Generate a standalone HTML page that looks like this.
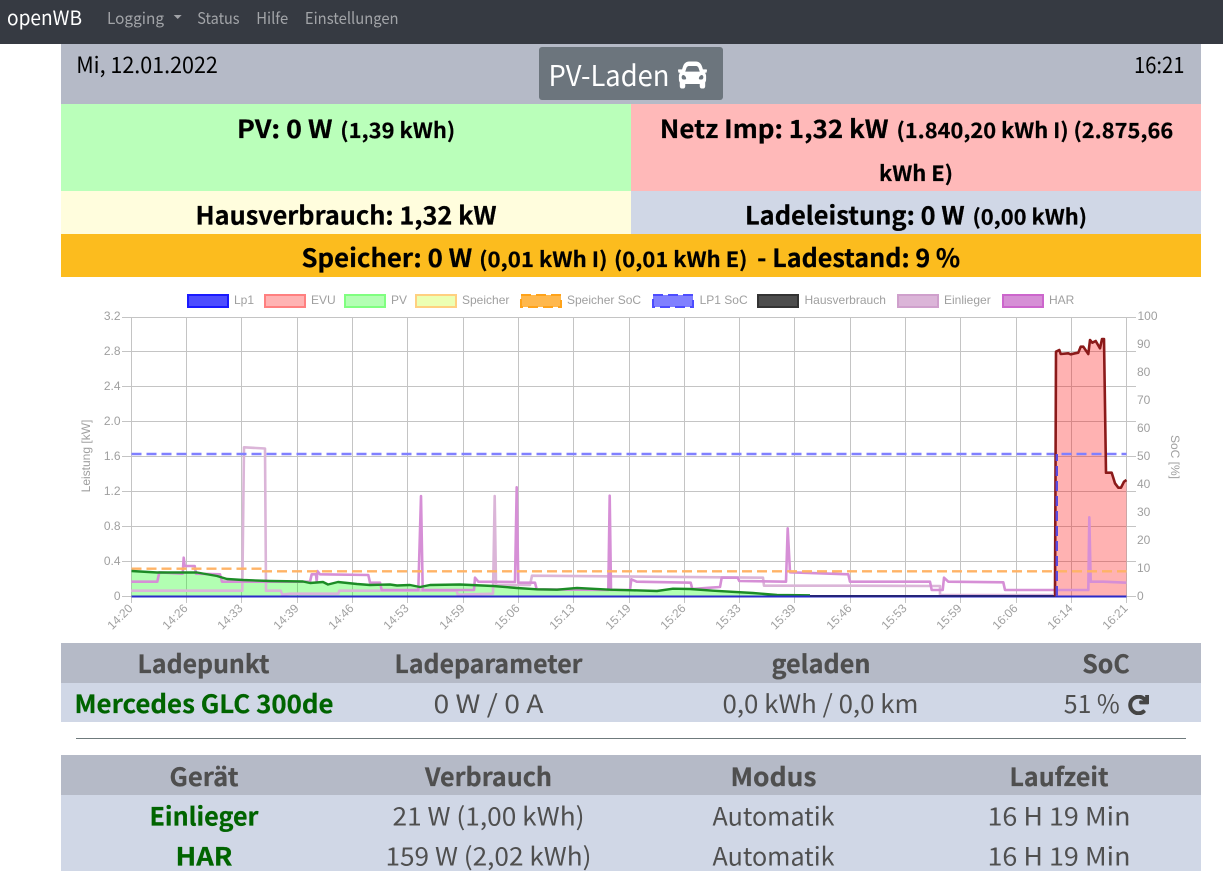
<!DOCTYPE html>
<html lang="de"><head><meta charset="utf-8"><title>openWB</title>
<style>
html,body{margin:0;padding:0;background:#fff;width:1223px;height:871px;overflow:hidden}
svg{display:block;position:absolute;left:0;top:0}
.n{font-family:"Noto Sans CJK JP","Liberation Sans",sans-serif}
.b{font-weight:700}
.c{font-family:"Liberation Sans",Arial,sans-serif;font-size:12px;fill:#9f9f9f}
.th{font-size:25px;font-weight:700;fill:#4f4f4f;stroke:#4f4f4f;stroke-width:.25px}
.td{font-size:25px;fill:#4f4f4f}
.gr{font-size:25px;font-weight:700;fill:#006400;stroke:#006400;stroke-width:.25px}
.nv{font-size:16px;fill:#a2a4a8}
.m{font-size:25px;font-weight:700;fill:#000;stroke:#000;stroke-width:.25px}
.s{font-size:21px;font-weight:700;fill:#000;stroke:#000;stroke-width:.2px}
</style></head><body>
<svg width="1223" height="871" viewBox="0 0 1223 871" xmlns="http://www.w3.org/2000/svg">
<defs></defs>
<!-- backgrounds -->
<rect x="0" y="0" width="1223" height="44" fill="#363a42"/>
<rect x="61" y="44" width="1140" height="60" fill="#b5bac7"/>
<rect x="61" y="104" width="570" height="87" fill="#baffba"/>
<rect x="631" y="104" width="570" height="87" fill="#ffb9b9"/>
<rect x="61" y="191" width="570" height="43" fill="#fffddd"/>
<rect x="631" y="191" width="570" height="43" fill="#d0d7e6"/>
<rect x="61" y="234" width="1140" height="43" fill="#fcbc1e"/>
<rect x="539" y="47" width="184" height="53" rx="3" fill="#6c757d"/>
<rect x="61" y="643" width="1140" height="40" fill="#b5bac7"/>
<rect x="61" y="683" width="1140" height="39" fill="#d0d7e6"/>
<rect x="76" y="738" width="1110" height="1" fill="#6f7a7c"/>
<rect x="61" y="755" width="1140" height="40" fill="#b5bac7"/>
<rect x="61" y="795" width="1140" height="76" fill="#d0d7e6"/>

<!-- navbar -->
<g class="n">
<text x="7" y="25" font-size="20" fill="#fff" textLength="75" lengthAdjust="spacingAndGlyphs">openWB</text>
<text class="nv" x="107" y="24" textLength="57" lengthAdjust="spacingAndGlyphs">Logging</text>
<text class="nv" x="197.3" y="24" textLength="42.3" lengthAdjust="spacingAndGlyphs">Status</text>
<text class="nv" x="256.2" y="24" textLength="32" lengthAdjust="spacingAndGlyphs">Hilfe</text>
<text class="nv" x="304.9" y="24" textLength="93.7" lengthAdjust="spacingAndGlyphs">Einstellungen</text>
</g>
<path d="M173.7 15h8l-4 4z" fill="#a2a4a8"/>

<!-- header -->
<g class="n">
<text x="76.2" y="73" font-size="22.5" fill="#000" textLength="141.7" lengthAdjust="spacingAndGlyphs">Mi, 12.01.2022</text>
<text x="1134" y="73" font-size="22.5" fill="#000" textLength="50.5" lengthAdjust="spacingAndGlyphs">16:21</text>
<text x="548.5" y="86" font-size="28.5" fill="#fff" textLength="121" lengthAdjust="spacingAndGlyphs">PV-Laden</text>
</g>
<svg x="678" y="57" width="29" height="36" viewBox="0 0 512 512" preserveAspectRatio="none"><path fill="#fff" d="M499.99 176h-59.87l-16.64-41.6C406.38 91.63 365.57 64 319.5 64h-127c-46.06 0-86.88 27.63-103.99 70.4L71.87 176H12.01C4.2 176-1.53 183.34.37 190.91l6 24C7.7 220.25 12.5 224 18.01 224h20.07C24.65 235.73 16 252.78 16 272v48c0 16.12 6.16 30.67 16 41.93V416c0 17.67 14.33 32 32 32h32c17.67 0 32-14.33 32-32v-32h256v32c0 17.67 14.33 32 32 32h32c17.67 0 32-14.33 32-32v-54.07c9.84-11.25 16-25.8 16-41.93v-48c0-19.22-8.65-36.27-22.07-48H494c5.51 0 10.31-3.75 11.64-9.09l6-24c1.89-7.57-3.84-14.91-11.65-14.91zm-352.06-17.83c7.29-18.22 24.94-30.17 44.57-30.17h127c19.63 0 37.28 11.95 44.57 30.17L384 208H128l19.93-49.83zM96 319.8c-19.2 0-32-12.76-32-31.9S76.8 256 96 256s48 28.71 48 47.85-28.8 15.95-48 15.95zm320 0c-19.2 0-48 3.19-48-15.95S396.8 256 416 256s32 12.76 32 31.9-12.8 31.9-32 31.9z"/></svg>

<!-- status rows -->
<g class="n">
<text class="m" x="237" y="138" textLength="95.5" lengthAdjust="spacingAndGlyphs">PV: 0 W</text>
<text class="s" x="340.3" y="138" textLength="114.9" lengthAdjust="spacingAndGlyphs">(1,39 kWh)</text>
<text class="m" x="659.9" y="138" textLength="228.6" lengthAdjust="spacingAndGlyphs">Netz Imp: 1,32 kW</text>
<text class="s" x="896.5" y="138" textLength="276.7" lengthAdjust="spacingAndGlyphs">(1.840,20 kWh I) (2.875,66</text>
<text class="s" x="879" y="181" textLength="74" lengthAdjust="spacingAndGlyphs">kWh E)</text>
<text class="m" x="195.5" y="224.5" textLength="301" lengthAdjust="spacingAndGlyphs">Hausverbrauch: 1,32 kW</text>
<text class="m" x="745" y="224.5" textLength="219.6" lengthAdjust="spacingAndGlyphs">Ladeleistung: 0 W</text>
<text class="s" x="972.5" y="224.5" textLength="114.5" lengthAdjust="spacingAndGlyphs">(0,00 kWh)</text>
<text class="m" x="301.5" y="267" textLength="170.7" lengthAdjust="spacingAndGlyphs">Speicher: 0 W</text>
<text class="s" x="479.1" y="267" textLength="128.4" lengthAdjust="spacingAndGlyphs">(0,01 kWh I)</text>
<text class="s" x="614" y="267" textLength="133.5" lengthAdjust="spacingAndGlyphs">(0,01 kWh E)</text>
<text class="m" x="757.2" y="267" textLength="202.9" lengthAdjust="spacingAndGlyphs">- Ladestand: 9 %</text>
</g>

<!-- legend -->
<g stroke-width="2">
<rect x="188" y="295" width="40" height="12" fill="#4d4dff" stroke="#1a1aff"/>
<rect x="265" y="295" width="40" height="12" fill="#ffb3b3" stroke="#ff8080"/>
<rect x="345" y="295" width="40" height="12" fill="#b3ffb3" stroke="#80ff80"/>
<rect x="416" y="295" width="40" height="12" fill="#ecffb3" stroke="#ffd080"/>
<rect x="521" y="295" width="40" height="12" fill="#ffb84d" stroke="#ffa31a" stroke-dasharray="10,5"/>
<rect x="653" y="295" width="40" height="12" fill="#8080ff" stroke="#4d4dff" stroke-dasharray="10,5"/>
<rect x="758" y="295" width="40" height="12" fill="#4d4d4d" stroke="#333"/>
<rect x="898" y="295" width="40" height="12" fill="#dbb5d8" stroke="#cfa0cc"/>
<rect x="1003" y="295" width="40" height="12" fill="#d68fd6" stroke="#cc66cc"/>
</g>
<g class="c">
<text x="234" y="304">Lp1</text><text x="311" y="304">EVU</text><text x="391" y="304">PV</text><text x="462" y="304">Speicher</text><text x="567" y="304">Speicher SoC</text><text x="699.6" y="304">LP1 SoC</text><text x="804.5" y="304">Hausverbrauch</text><text x="944" y="304">Einlieger</text><text x="1049" y="304">HAR</text>
</g>

<!-- grid -->
<path stroke="#c4c4c4" stroke-width="1" fill="none" d="M122 317.5H1136M122 351.5H1136M122 386.5H1136M122 421.5H1136M122 456.5H1136M122 491.5H1136M122 526.5H1136M122 561.5H1136M122 596.5H1136M131.5 317V603M186.5 317V603M241.5 317V603M297.5 317V603M352.5 317V603M407.5 317V603M463.5 317V603M518.5 317V603M573.5 317V603M629.5 317V603M684.5 317V603M739.5 317V603M794.5 317V603M850.5 317V603M905.5 317V603M960.5 317V603M1016.5 317V603M1071.5 317V603M1126.5 317V603"/>

<!-- y ticks -->
<g class="c" text-anchor="end">
<text x="120.5" y="320">3.2</text><text x="120.5" y="355">2.8</text><text x="120.5" y="390">2.4</text><text x="120.5" y="425">2.0</text><text x="120.5" y="460">1.6</text><text x="120.5" y="495">1.2</text><text x="120.5" y="530">0.8</text><text x="120.5" y="565">0.4</text><text x="120.5" y="600">0</text>
</g>
<g class="c">
<text x="1137.5" y="320">100</text><text x="1137" y="348">90</text><text x="1137" y="376">80</text><text x="1137" y="404">70</text><text x="1137" y="432">60</text><text x="1137" y="460">50</text><text x="1137" y="488">40</text><text x="1137" y="516">30</text><text x="1137" y="544">20</text><text x="1137" y="572">10</text><text x="1137" y="600">0</text>
</g>
<text class="c" transform="translate(90 456) rotate(-90)" text-anchor="middle">Leistung [kW]</text>
<text class="c" transform="translate(1171 457) rotate(90)" text-anchor="middle">SoC [%]</text>

<!-- x ticks -->
<g class="c" text-anchor="end">
<text transform="translate(133.5 609) rotate(-45)">14:20</text>
<text transform="translate(188.5 609) rotate(-45)">14:26</text>
<text transform="translate(243.5 609) rotate(-45)">14:33</text>
<text transform="translate(299.5 609) rotate(-45)">14:39</text>
<text transform="translate(354.5 609) rotate(-45)">14:46</text>
<text transform="translate(409.5 609) rotate(-45)">14:53</text>
<text transform="translate(465.5 609) rotate(-45)">14:59</text>
<text transform="translate(520.5 609) rotate(-45)">15:06</text>
<text transform="translate(575.5 609) rotate(-45)">15:13</text>
<text transform="translate(631.5 609) rotate(-45)">15:19</text>
<text transform="translate(686.5 609) rotate(-45)">15:26</text>
<text transform="translate(741.5 609) rotate(-45)">15:33</text>
<text transform="translate(796.5 609) rotate(-45)">15:39</text>
<text transform="translate(852.5 609) rotate(-45)">15:46</text>
<text transform="translate(907.5 609) rotate(-45)">15:53</text>
<text transform="translate(962.5 609) rotate(-45)">15:59</text>
<text transform="translate(1018.5 609) rotate(-45)">16:06</text>
<text transform="translate(1073.5 609) rotate(-45)">16:14</text>
<text transform="translate(1128.5 609) rotate(-45)">16:21</text>
</g>

<!-- fills -->
<path fill="rgba(0,255,0,.3)" d="M131.5 596.3V571L157 572.5 183 572.5 197 572.5 217 576 227 579 243 580 270 581 303 581.5 310 583 323 582 328 584.5 338 582 357 584 370 585 390 584.5 397 585.5 410 585 420 587 430 585 460 584.5 493 586 517 588 537 589.3 557 589.7 577 588 610 589.7 633 590.3 657 591 673 588.7 690 589 713 590.7 753 593 777 595 810 595.3 837 596.3Z"/>
<path fill="rgba(255,0,0,.3)" d="M1055 596.3L1056 351.7 1059.3 350 1060.7 354 1068.3 353.3 1070.7 354.3 1075 353.3 1078.3 352.7 1080.7 346.7 1083.3 346.7 1088.3 354 1090 340 1092.3 342.7 1095.7 341 1100 348.3 1102 339 1104 339 1106 472.7 1111.7 472.7 1115 483.3 1118.3 487.7 1121 487.7 1124 481.7 1126.5 480V596.3Z"/>

<!-- lines -->
<g fill="none" stroke-linejoin="round">
<path stroke="#dbb5d8" stroke-width="2.6" d="M131.3 590.7H242.3L244 447.3 265 448.5 266 590.7H280.7L282.3 594.7 290 593.7H338.3L339.3 590.7H456.7L457.7 594.7 460 594.7 493 593.7 494.7 496 496 585H530L532 575.7 763 577.7 764 585.7H850L932 586H940V595H1053"/>
<path stroke="#d68fd6" stroke-width="2.6" d="M131.3 581.7H157.3L159.3 572.3 182.7 573.7 183.7 557.7 184.7 566H194.7L196 573.7 220 574.3 222 581.7H310L311.7 574.3H316L316.7 581.7 317.3 571 320 574.3 368.3 575 370 582.7H380L381.7 590H418.3L421 496 422.7 590H474L475 577.7 478.3 581.7 515 582 516.7 487.3 518.3 582.7H535L536.7 589.3 608.3 590 609.7 495.7 611 590H630L631.3 579.3 636.7 581.7 690.7 582.7 692.3 589 710 587.7 720 587 721.7 577.7H737.7L739.3 581 786 581.7 787.7 528.3 790 572.3 848.3 574.3 850 581.7 930 581.7 931.7 590H942.7L944 577.7 948.3 581.7 1003.3 582.3 1005 590H1088.3L1089.3 517.3 1090.7 581.7H1103.3L1126.3 582.7"/>
<path stroke="#ffb366" stroke-width="2.4" stroke-dasharray="10,5" d="M131.5 568.7H262M262 571.3H1126.5"/>
<path stroke="#8080ff" stroke-width="2.4" stroke-dasharray="10,5" d="M131.5 454H1126.5"/>
<path stroke="#1c8c26" stroke-width="2.4" d="M131.5 571L157 572.5 183 572.5 197 572.5 217 576 227 579 243 580 270 581 303 581.5 310 583 323 582 328 584.5 338 582 357 584 370 585 390 584.5 397 585.5 410 585 420 587 430 585 460 584.5 493 586 517 588 537 589.3 557 589.7 577 588 610 589.7 633 590.3 657 591 673 588.7 690 589 713 590.7 753 593 777 595 810 595.3"/>
<path stroke="#2a2ac8" stroke-width="2" d="M131.5 596.5H1126.5"/>
<path stroke="#24247a" stroke-width="2" d="M810 596H1055"/>
<path stroke="#8b1a1a" stroke-width="2.6" d="M1055 596.3L1056 351.7 1059.3 350 1060.7 354 1068.3 353.3 1070.7 354.3 1075 353.3 1078.3 352.7 1080.7 346.7 1083.3 346.7 1088.3 354 1090 340 1092.3 342.7 1095.7 341 1100 348.3 1102 339 1104 339 1106 472.7 1111.7 472.7 1115 483.3 1118.3 487.7 1121 487.7 1124 481.7 1126.5 480"/>
<path stroke="#5a4ae0" stroke-width="2.4" stroke-dasharray="10,5" d="M1056.8 596V454"/>
</g>

<!-- table 1 -->
<g class="n">
<text class="th" x="137.5" y="673" textLength="132" lengthAdjust="spacingAndGlyphs">Ladepunkt</text>
<text class="th" x="394.5" y="673" textLength="188" lengthAdjust="spacingAndGlyphs">Ladeparameter</text>
<text class="th" x="771.5" y="673" textLength="99" lengthAdjust="spacingAndGlyphs">geladen</text>
<text class="th" x="1082.2" y="673" textLength="47.5" lengthAdjust="spacingAndGlyphs">SoC</text>
<text class="gr" x="74.5" y="713" textLength="259" lengthAdjust="spacingAndGlyphs">Mercedes GLC 300de</text>
<text class="td" x="433.5" y="713" textLength="110" lengthAdjust="spacingAndGlyphs">0 W / 0 A</text>
<text class="td" x="722.5" y="713" textLength="196" lengthAdjust="spacingAndGlyphs">0,0 kWh / 0,0 km</text>
<text class="td" x="1063.8" y="713" textLength="56" lengthAdjust="spacingAndGlyphs">51 %</text>
</g>
<svg x="1128" y="695" width="21" height="20" viewBox="0 0 512 512"><path fill="#454545" stroke="#454545" stroke-width="30" d="M500.33 0h-47.41a12 12 0 0 0-12 12.57l4 82.76A247.42 247.42 0 0 0 256 8C119.34 8 8.9 119.53 8 256.19 7.1 393.07 117.82 504 256 504a247.1 247.1 0 0 0 166.18-63.91 12 12 0 0 0 .48-17.43l-34-34a12 12 0 0 0-16.38-.55A176 176 0 1 1 402.1 157.8l-101.53-4.87a12 12 0 0 0-12.57 12v47.41a12 12 0 0 0 12 12h200.33a12 12 0 0 0 12-12V12a12 12 0 0 0-12-12z"/></svg>

<!-- table 2 -->
<g class="n">
<text class="th" x="169.5" y="786" textLength="69" lengthAdjust="spacingAndGlyphs">Gerät</text>
<text class="th" x="425" y="786" textLength="127" lengthAdjust="spacingAndGlyphs">Verbrauch</text>
<text class="th" x="730.5" y="786" textLength="86" lengthAdjust="spacingAndGlyphs">Modus</text>
<text class="th" x="1009.5" y="786" textLength="99" lengthAdjust="spacingAndGlyphs">Laufzeit</text>
<text class="gr" x="149.5" y="825.3" textLength="109" lengthAdjust="spacingAndGlyphs">Einlieger</text>
<text class="td" x="392.5" y="825.3" textLength="192" lengthAdjust="spacingAndGlyphs">21 W (1,00 kWh)</text>
<text class="td" x="712.5" y="825.3" textLength="122" lengthAdjust="spacingAndGlyphs">Automatik</text>
<text class="td" x="987.5" y="825.3" textLength="143" lengthAdjust="spacingAndGlyphs">16 H 19 Min</text>
<text class="gr" x="175.5" y="865.3" textLength="57" lengthAdjust="spacingAndGlyphs">HAR</text>
<text class="td" x="385.5" y="865.3" textLength="206" lengthAdjust="spacingAndGlyphs">159 W (2,02 kWh)</text>
<text class="td" x="712.5" y="865.3" textLength="122" lengthAdjust="spacingAndGlyphs">Automatik</text>
<text class="td" x="987.5" y="865.3" textLength="143" lengthAdjust="spacingAndGlyphs">16 H 19 Min</text>
</g>
</svg>
</body></html>
